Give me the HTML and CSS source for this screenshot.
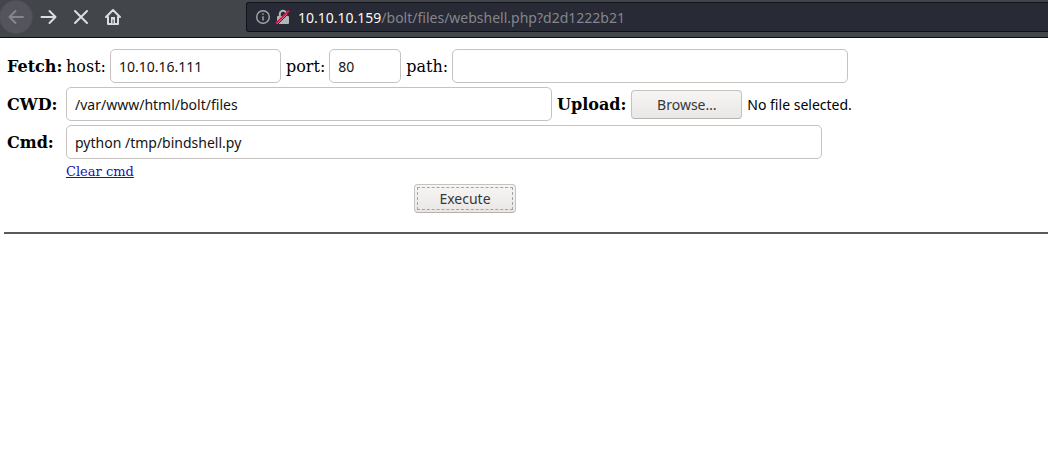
FILE: index.html
```html
<!DOCTYPE html>
<html lang="en">
<head>
<meta charset="utf-8">
<meta name="viewport" content="width=device-width, initial-scale=1">
<title>webshell.php</title>
<link rel="stylesheet" href="styles.css">
</head>
<body>
<header class="toolbar">
  <nav class="nav" aria-label="Browser">
    <button class="nav-btn nav-back" type="button" aria-label="Back" disabled>
      <svg class="icon" viewBox="0 0 16 16"><path d="M15 8H1.500M7.500 2L1.500 8l6 6"/></svg>
    </button>
    <button class="nav-btn" type="button" aria-label="Forward">
      <svg class="icon" viewBox="0 0 16 16"><path d="M1.500 8H15M9.500 2l6 6-6 6"/></svg>
    </button>
    <button class="nav-btn" type="button" aria-label="Stop">
      <svg class="icon" viewBox="0 0 16 16"><path d="M3 2l12 12M15 2L3 14"/></svg>
    </button>
    <button class="nav-btn" type="button" aria-label="Home">
      <svg class="icon" viewBox="0 0 16 16"><path d="M2 8l7-7 7 7M4 8v7h10V8"/><path class="fill" d="M7 8h4v7H7z"/><path class="knob" d="M9 11v3"/></svg>
    </button>
  </nav>
  <div class="address">
    <svg class="info" viewBox="0 0 14 14"><circle cx="7" cy="7" r="6.300"/><path d="M7 6.200v4.300M7 3.300v1.500"/></svg>
    <svg class="lock" viewBox="0 0 16 16"><path class="shackle" d="M4.800 8V5a3.200 3.200 0 0 1 6.400 0v3"/><rect x="2" y="7" width="12" height="8" rx="1"/><path class="gap" d="M2 16L15.500 2.500"/><path class="slash" d="M1 14.500L14 1.500"/></svg>
    <span class="url"><span class="url-host">10.10.10.159</span>/bolt/files/webshell.php?d2d1222b21</span>
  </div>
</header>
<main class="page">
  <form class="shell">
    <div class="row">
      <strong class="heading">Fetch:</strong>
      <div class="pair">
        <label class="name" for="host">host:</label>
        <input class="field host" id="host" type="text" value="10.10.16.111">
      </div>
      <div class="pair">
        <label class="name" for="port">port:</label>
        <input class="field port" id="port" type="text" value="80">
      </div>
      <div class="pair">
        <label class="name" for="path">path:</label>
        <input class="field path" id="path" type="text">
      </div>
    </div>
    <div class="row">
      <label class="heading" for="cwd">CWD:</label>
      <input class="field cwd" id="cwd" type="text" value="/var/www/html/bolt/files">
      <label class="name bold" for="upload">Upload:</label>
      <div class="upload">
        <span class="button browse">Browse…</span>
        <span class="status">No file selected.</span>
        <input class="picker" id="upload" type="file">
      </div>
    </div>
    <div class="row">
      <label class="heading" for="cmd">Cmd:</label>
      <input class="field cmd" id="cmd" type="text" value="python /tmp/bindshell.py">
    </div>
    <div class="actions">
      <a class="clear" href="#cmd">Clear cmd</a>
      <button class="button execute" type="button">Execute</button>
    </div>
  </form>
  <hr class="rule">
</main>
</body>
</html>
```
FILE: styles.css
```css
* {
  box-sizing: border-box;
}

body {
  margin: 0;
  background: #fff;
  color: #000;
  font: 16px/20px "DejaVu Serif", serif;
}

.toolbar {
  display: flex;
  align-items: flex-start;
  height: 38px;
  background: #42454a;
  border-bottom: 1px solid #0d0e12;
}

.nav {
  display: flex;
  width: 246px;
  flex: none;
  padding-top: 1px;
}

.nav-btn {
  display: flex;
  align-items: center;
  justify-content: center;
  width: 32px;
  height: 32px;
  padding: 0;
  border: 0;
  border-radius: 50%;
  background: none;
  color: #dcdddf;
}

.nav-back {
  background: #53545c;
  color: #85868c;
  box-shadow: 0 0 0 1px #4c4e55;
}

.icon {
  width: 16px;
  height: 16px;
  overflow: visible;
  fill: none;
  stroke: currentColor;
  stroke-width: 2;
  stroke-linecap: round;
  stroke-linejoin: round;
}

.icon .fill {
  fill: currentColor;
  stroke: none;
}

.icon .knob {
  stroke: #42454a;
  stroke-width: 1;
}

.address {
  display: flex;
  align-items: center;
  flex: 1;
  min-width: 0;
  height: 30px;
  margin-top: 2px;
  padding-left: 9px;
  background: #282a36;
  border: 1px solid #11131a;
  border-right: 0;
  border-radius: 3px 0 0 3px;
}

.info {
  width: 14px;
  height: 14px;
  margin-right: 5px;
  fill: none;
  stroke: #a5a6aa;
  stroke-width: 1.4;
}

.lock {
  width: 16px;
  height: 16px;
  margin-right: 7px;
  fill: #b4b5b8;
}

.lock .shackle {
  fill: none;
  stroke: #b4b5b8;
  stroke-width: 2;
}

.lock .gap {
  stroke: #282a36;
  stroke-width: 1;
}

.lock .slash {
  stroke: #e5154f;
  stroke-width: 2;
}

.url {
  overflow: hidden;
  padding-top: 1px;
  color: #85868d;
  font: 14px/20px "Noto Sans", sans-serif;
  white-space: nowrap;
}

.url-host {
  color: #f8f8f2;
}

.page {
  padding: 11px 0 0 4px;
}

.shell {
  display: flex;
  flex-direction: column;
  gap: 4px;
  padding-left: 3px;
}

.row {
  display: flex;
  align-items: center;
  gap: 5px;
  white-space: nowrap;
}

.pair {
  display: flex;
  align-items: center;
  gap: 4px;
}

.heading,
.name {
  padding-top: 2px;
}

.heading {
  width: 54px;
  flex: none;
  font-weight: bold;
}

.bold {
  font-weight: bold;
}

.field {
  height: 34px;
  padding: 0 8px;
  background: #fff;
  border: 1px solid #c5c2bf;
  border-radius: 5px;
  color: #141414;
  font: 14px/20px "Noto Sans", sans-serif;
}

.host {
  width: 171px;
}

.port {
  width: 72px;
}

.path {
  width: 396px;
}

.cwd {
  width: 486px;
}

.cmd {
  width: 756px;
}

.upload {
  position: relative;
  display: flex;
  align-items: center;
  gap: 5px;
}

.picker {
  position: absolute;
  inset: 0;
  width: 100%;
  opacity: 0;
}

.button {
  height: 29px;
  padding: 0;
  background: linear-gradient(#f6f5f4, #e9e8e7);
  border: 1px solid #c5c2c0;
  border-bottom-color: #b5b2b0;
  border-radius: 4px;
  color: #34383a;
  font: 14px/27px "Noto Sans", sans-serif;
  text-align: center;
}

.browse {
  width: 111px;
}

.status {
  padding-top: 2px;
  font: 14px/20px "Noto Sans", sans-serif;
}

.actions {
  display: flex;
  flex-direction: column;
  align-items: center;
  gap: 4px;
  width: 100%;
  max-width: 857px;
  padding-left: 59px;
}

.clear {
  align-self: flex-start;
  color: #1a0fb4;
  font-size: 13px;
  line-height: 17px;
}

.execute {
  width: 102px;
  outline: 1px dashed #a5a4a3;
  outline-offset: -4px;
}

.rule {
  height: 2px;
  margin: 19px 0 0;
  border: 0;
  background: #5a5a5a;
}
```
